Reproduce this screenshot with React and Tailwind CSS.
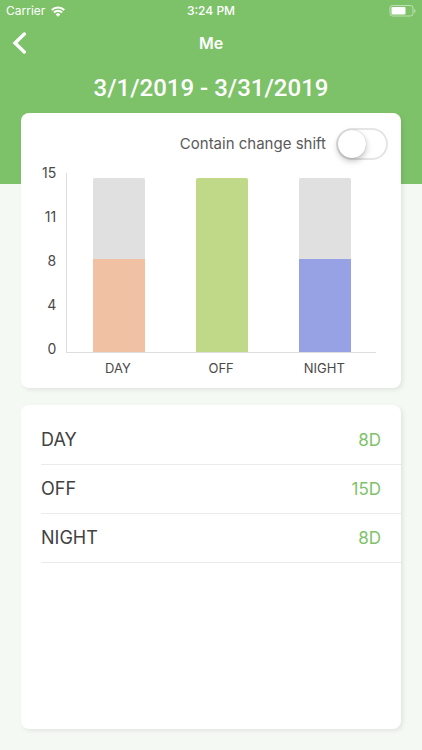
const shifts = [
  { name: "DAY", days: 8, color: "bg-[#f0c1a3]" },
  { name: "OFF", days: 15, color: "bg-[#c0d988]" },
  { name: "NIGHT", days: 8, color: "bg-[#96a2e3]" },
];
const maxDays = 15;
const ticks = [15, 11, 8, 4, 0];

function StatusBar() {
  return (
    <div className="grid h-[22px] grid-cols-3 items-center px-1.5 text-[12px] leading-4">
      <div className="flex items-center gap-1.5">
        <span>Carrier</span>
        <svg width="14" height="11" viewBox="0 0 14 11" fill="none" stroke="currentColor" strokeWidth="2.1" aria-hidden="true">
          <path d="M0.7 4a9 9 0 0 1 12.6 0" />
          <path d="M2.9 6.6a5.8 5.8 0 0 1 8.2 0" />
          <path d="M7 10.8 4.7 8.5a3.2 3.2 0 0 1 4.6 0Z" fill="currentColor" stroke="none" />
        </svg>
      </div>
      <span className="text-center font-medium">3:24 PM</span>
      <svg className="justify-self-end" width="27" height="12" viewBox="0 0 27 12" aria-hidden="true">
        <rect x="1" y="0.5" width="23" height="10.5" rx="2.5" fill="none" stroke="#ffffff" strokeOpacity="0.5" />
        <rect x="2.5" y="2" width="14" height="7.5" rx="1" fill="#ffffff" />
        <path d="M25.2 4v4c1.8-.6 1.8-3.4 0-4Z" fill="#ffffff" fillOpacity="0.5" />
      </svg>
    </div>
  );
}

function ShiftChart() {
  return (
    <div className="grid grid-cols-[auto_1fr] gap-x-2.5 pr-[25px] pl-[21px] text-[13px] leading-4 text-[#4a4a4a]">
      <div className="-mt-2 -mb-1 flex flex-col justify-between text-right text-[14px]">
        {ticks.map((tick) => (
          <span key={tick}>{tick}</span>
        ))}
      </div>
      <div className="grid h-[180px] grid-cols-3 items-end border-b border-l border-[#dedede]">
        {shifts.map((shift) => (
          <div key={shift.name} className="mx-auto flex h-[174px] w-[52px] items-end overflow-hidden rounded-t-xs bg-[#e0e0e0]">
            <div className={`w-full ${shift.color}`} style={{ height: `${(shift.days / maxDays) * 100}%` }} />
          </div>
        ))}
      </div>
      <div className="col-start-2 grid grid-cols-3 pt-[7px] text-center">
        {shifts.map((shift) => (
          <span key={shift.name}>{shift.name}</span>
        ))}
      </div>
    </div>
  );
}

export default function App() {
  return (
    <div className="flex min-h-screen flex-col bg-[#f4f9f4] font-['Inter','Liberation_Sans',sans-serif]">
      <header className="bg-[#7dc268] pb-[71px] text-white">
        <StatusBar />
        <nav className="grid h-[42px] grid-cols-3 items-center px-3">
          <button type="button" aria-label="Back" className="w-6">
            <svg width="15" height="22" viewBox="0 0 15 22" fill="none" stroke="currentColor" strokeWidth="3.4" strokeLinecap="round" strokeLinejoin="miter" aria-hidden="true">
              <path d="M12.3 2 3 11l9.3 9" />
            </svg>
          </button>
          <h1 className="text-center text-[16px] leading-5 font-semibold">Me</h1>
        </nav>
        <p className="pt-2 pb-[9px] text-center font-['Roboto',sans-serif] text-[24px] leading-8 font-medium">
          3/1/2019 - 3/31/2019
        </p>
      </header>
      <main className="-mt-[71px] flex flex-1 flex-col gap-[17px] px-[21px] pb-[21px]">
        <section className="rounded-lg bg-white pb-3 shadow-[2px_2px_4px_rgba(0,0,0,0.08)]">
          <div className="flex items-center justify-end gap-2.5 pt-[15px] pr-[13px] pb-[13px]">
            <label htmlFor="change-shift" className="text-[15px] leading-5 text-[#5a5a5a]">
              Contain change shift
            </label>
            <input
              id="change-shift"
              type="checkbox"
              role="switch"
              className="h-8 w-[52px] appearance-none rounded-full border-2 border-[#e5e5e5] bg-white before:block before:size-7 before:rounded-full before:bg-white before:shadow-[0_3px_6px_rgba(0,0,0,0.25),0_0_1px_rgba(0,0,0,0.3)] checked:bg-[#7dc268] checked:before:ml-5"
            />
          </div>
          <ShiftChart />
        </section>
        <section className="flex-1 rounded-lg bg-white pt-[11px] shadow-[2px_2px_4px_rgba(0,0,0,0.08)]">
          <ul className="pl-5">
            {shifts.map((shift) => (
              <li key={shift.name} className="flex h-[49px] items-center justify-between border-b border-[#ebebeb] pr-5">
                <span className="text-[18px] leading-6 text-[#424242]">{shift.name}</span>
                <span className="text-[17px] leading-6 text-[#7dc268]">{shift.days}D</span>
              </li>
            ))}
          </ul>
        </section>
      </main>
    </div>
  );
}
